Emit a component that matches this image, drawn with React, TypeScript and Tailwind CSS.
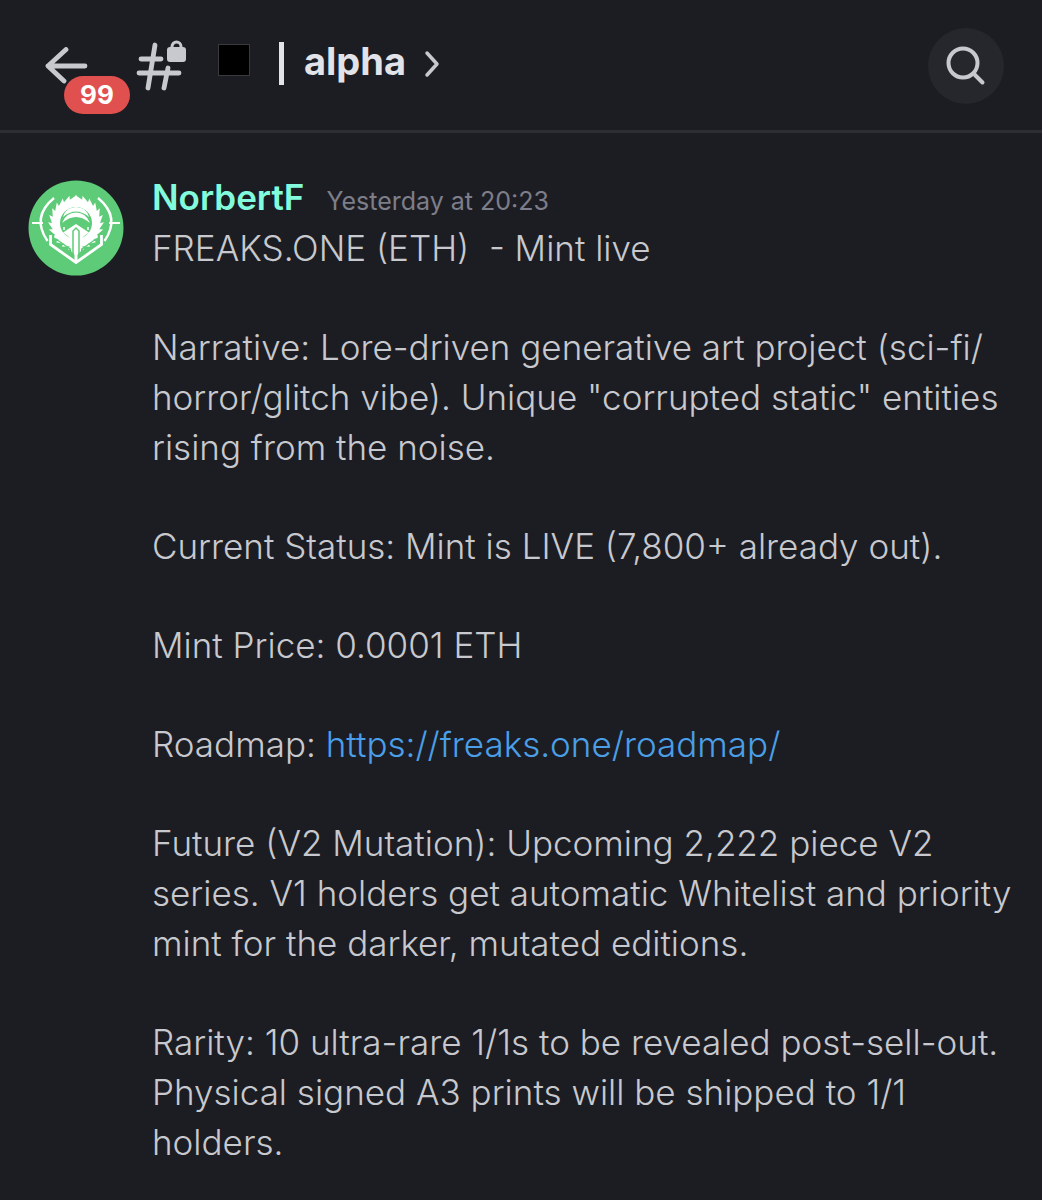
import type { ReactNode } from "react";

const paragraphs: ReactNode[] = [
  <>
    Narrative: Lore-driven generative art project (sci-fi/
    <wbr />
    horror/glitch vibe). Unique "corrupted static" entities rising from the noise.
  </>,
  "Current Status: Mint is LIVE (7,800+ already out).",
  "Mint Price: 0.0001 ETH",
  <>
    Roadmap:{" "}
    <a href="https://freaks.one/roadmap/" className="text-[#4a9fe8] hover:underline">
      https://freaks.one/roadmap/
    </a>
  </>,
  "Future (V2 Mutation): Upcoming 2,222 piece V2 series. V1 holders get automatic Whitelist and priority mint for the darker, mutated editions.",
  "Rarity: 10 ultra-rare 1/1s to be revealed post-sell-out. Physical signed A3 prints will be shipped to 1/1 holders.",
];

function BackIcon() {
  return (
    <svg width="44" height="38" viewBox="0 0 44 38" fill="none" stroke="#c8c9ce" strokeWidth="4.8" strokeLinecap="round" strokeLinejoin="round" aria-hidden="true">
      <path d="M41 19H4M22 2.500L4 19L20 34" />
    </svg>
  );
}

function LockedHashIcon() {
  return (
    <svg width="52" height="52" viewBox="0 0 52 52" fill="none" aria-hidden="true">
      <g stroke="#c8c9ce" strokeWidth="4.8" strokeLinecap="round">
        <path d="M19 5L12 48M32 28L28 48M5 19H25M3 33H43" />
      </g>
      <rect x="31" y="7" width="19" height="15" rx="3" fill="#c8c9ce" />
      <path d="M36 8V6.500a4.500 4.500 0 0 1 9 0v2" stroke="#c8c9ce" strokeWidth="3" />
    </svg>
  );
}

function SearchIcon() {
  return (
    <svg width="40" height="40" viewBox="0 0 40 40" fill="none" stroke="#c8c9ce" strokeWidth="4" strokeLinecap="round" aria-hidden="true">
      <circle cx="17" cy="17" r="14.500" />
      <path d="M27.500 27.500L36.500 36.500" />
    </svg>
  );
}

/* feathered ring round the hood, each feather leaning towards the top */
const FEATHERS = Array.from({ length: 24 }, (_, i) => {
  const step = (Math.PI * 2) / 24;
  const a = -Math.PI / 2 + i * step;
  const lean = i < 12 ? -0.16 : 0.16;
  const at = (r: number, t: number) =>
    `${(48 + r * Math.cos(t)).toFixed(1)} ${(43 + r * Math.sin(t)).toFixed(1)}`;
  return `${at(24, a)} ${at(28, a + step / 2 + lean)} ${at(24, a + step)}`;
}).join(" ");

function Avatar() {
  return (
    <svg viewBox="0 0 96 96" className="size-24 shrink-0" role="img" aria-label="NorbertF avatar">
      <circle cx="48" cy="48" r="47.500" fill="#5dcb77" />
      <g fill="none" stroke="#fff" strokeWidth="2.4">
        <path d="M26 18Q3 37 19.500 61M70 18Q93 37 76.500 61" />
        <path d="M4 43H15M81 43H92" strokeWidth="2" />
      </g>
      <polygon points={FEATHERS} fill="#fff" />
      <circle cx="48" cy="43" r="16" fill="#5dcb77" />
      <path d="M35 37Q38 27 48 27T61 37Q48 26 35 37Z" fill="#fff" />
      <path d="M34 43Q38 32.500 48 32.500T62 43Q48 31 34 43Z" fill="#fff" />
      <path d="M36 47V50M60 47V50" stroke="#fff" strokeWidth="1.500" />
      {/* collar */}
      <g fill="none" strokeLinejoin="miter">
        <path d="M25 54V61.500L48 78L71 61.500V54" stroke="#5dcb77" strokeWidth="2.400" />
        <path d="M28 59L45 71M68 59L51 71" stroke="#5dcb77" strokeWidth="1.400" />
        <path d="M22.500 55V64.500L48 82.500L73.500 64.500V55" stroke="#fff" strokeWidth="2.800" />
      </g>
      {/* beak */}
      <path d="M48 44L61 52.500L55 57L53 60V71L48 76L43 71V60L41 57L35 52.500Z" fill="#fff" />
      <path d="M45 78V51L48 48L51 51V78" fill="none" stroke="#5dcb77" strokeWidth="1.500" />
      <path d="M48 51V81" stroke="#fff" strokeWidth="3" />
    </svg>
  );
}

function ChannelHeader() {
  return (
    <header className="flex h-[133px] items-start justify-between border-b-[3px] border-[#2d2e33] pl-11 pr-[38px]">
      <div className="flex items-start">
        <button type="button" aria-label="Back, 99 unread" className="relative mt-[47px] cursor-pointer">
          <BackIcon />
          <span className="absolute left-5 top-[29px] flex h-[38px] w-[66px] items-center justify-center rounded-full bg-[#e0504f] text-[26px] leading-[36px] font-bold text-white">
            99
          </span>
        </button>
        <button type="button" className="ml-12 flex cursor-pointer items-start">
          <span className="mt-10">
            <LockedHashIcon />
          </span>
          <span className="ml-[30px] mt-[44px] size-8 border border-[#3a3a3e] bg-black" />
          <span className="ml-[29px] mt-[42px] h-[43px] w-[5px] bg-[#e2e3e8]" />
          <span className="ml-5 mt-9 text-[38px] leading-[50px] font-bold text-[#e2e3e8]">alpha</span>
          <svg width="16" height="28" viewBox="0 0 16 28" className="ml-[18px] mt-[50px]" fill="none" stroke="#c8c9ce" strokeWidth="3.500" strokeLinecap="round" strokeLinejoin="round" aria-hidden="true">
            <path d="M3 3L13 14L3 25" />
          </svg>
        </button>
      </div>
      <button type="button" aria-label="Search" className="mt-7 flex size-19 cursor-pointer items-center justify-center rounded-full bg-[#26272c]">
        <SearchIcon />
      </button>
    </header>
  );
}

function Message() {
  return (
    <article className="flex gap-7 pl-7 pr-7 pt-[47px] pb-7">
      <Avatar />
      <div className="min-w-0 flex-1 -mt-2">
        <div className="flex h-[51px] items-baseline gap-[22px] leading-[50px]">
          <h2 className="text-[35px] font-semibold text-[#82fbdc]">NorbertF</h2>
          <time className="text-[25px] text-[#7d7e8a]">Yesterday at 20:23</time>
        </div>
        <div className="flex flex-col gap-[49px] text-[35px] leading-[50px] font-light text-[#c8c9ce]">
          <p className="whitespace-pre-wrap">FREAKS.ONE (ETH)  - Mint live</p>
          {paragraphs.map((text, i) => (
            <p key={i}>{text}</p>
          ))}
        </div>
      </div>
    </article>
  );
}

export default function App() {
  return (
    <main className="min-h-screen bg-[#1c1d22] font-['Inter','Noto_Sans',sans-serif]">
      <ChannelHeader />
      <Message />
    </main>
  );
}
